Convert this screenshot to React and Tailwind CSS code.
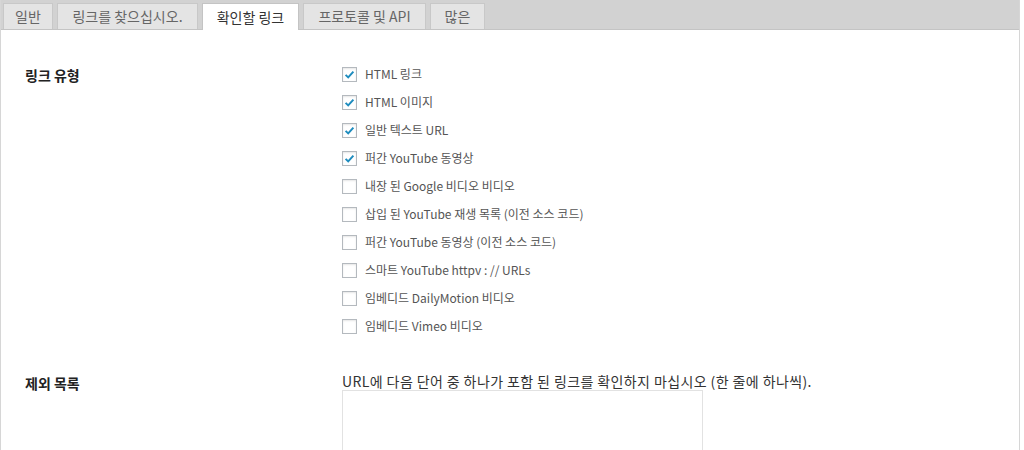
const tabs = [
  { label: "일반", w: "w-[50px]" },
  { label: "링크를 찾으십시오.", w: "w-[141px]" },
  { label: "확인할 링크", w: "w-[97px]", active: true },
  { label: "프로토콜 및 API", w: "w-[123px]" },
  { label: "많은", w: "w-[55px]" },
];

const linkTypes = [
  { label: "HTML 링크", checked: true },
  { label: "HTML 이미지", checked: true },
  { label: "일반 텍스트 URL", checked: true },
  { label: "퍼간 YouTube 동영상", checked: true },
  { label: "내장 된 Google 비디오 비디오" },
  { label: "삽입 된 YouTube 재생 목록 (이전 소스 코드)" },
  { label: "퍼간 YouTube 동영상 (이전 소스 코드)" },
  { label: "스마트 YouTube httpv : // URLs" },
  { label: "임베디드 DailyMotion 비디오" },
  { label: "임베디드 Vimeo 비디오" },
];

const Checkbox = ({ checked }) => (
  <span className="w-[15px] h-[15px] border border-[#b4b9be] bg-white shadow-[inset_0_1px_2px_rgba(0,0,0,0.1)] flex items-center justify-center shrink-0">
    {checked && (
      <svg width="13" height="13" viewBox="0 0 20 20">
        <path d="M4 10.5l4 4 8-9" fill="none" stroke="#1e8cbe" strokeWidth="3" />
      </svg>
    )}
  </span>
);

const App = () => {
  return (
    <div className="w-[1024px] h-[450px] overflow-hidden bg-white font-['Noto_Sans_CJK_KR','Liberation_Sans',sans-serif]">
      <div className="w-[1020px] h-[450px] border-l border-r border-[#d6d6d6] flex flex-col">
        {/* tab strip */}
        <div className="h-[30px] bg-[#d2d2d2] border-b border-[#c4c4c4] flex items-end gap-[4px] pl-[2px] shrink-0">
          {tabs.map((t) => (
            <div
              key={t.label}
              className={
                t.active
                  ? `${t.w} h-[27px] -mb-px bg-white border border-b-0 border-[#c4c4c4] flex items-center justify-center text-[14px] text-[#333]`
                  : `${t.w} h-[26px] bg-[#e4e4e4] border border-b-0 border-[#c8c8c8] flex items-center justify-center text-[14px] text-[#666]`
              }
            >
              {t.label}
            </div>
          ))}
        </div>

        {/* settings table */}
        <div className="grid grid-cols-[317px_1fr] pl-[24px] pt-[30px]">
          <div className="text-[14px] font-bold text-[#222] pt-[5px]">링크 유형</div>
          <div className="flex flex-col">
            {linkTypes.map((l) => (
              <label key={l.label} className="h-[28px] flex items-center gap-[8px] text-[12px] text-[#555]">
                <Checkbox checked={l.checked} />
                <span>{l.label}</span>
              </label>
            ))}
          </div>

          <div className="text-[14px] font-bold text-[#222] pt-[33px]">제외 목록</div>
          <div className="pt-[33px]">
            <p className="text-[14px] text-[#333] leading-[16px] tracking-[0.4px]">
              URL에 다음 단어 중 하나가 포함 된 링크를 확인하지 마십시오 (한 줄에 하나씩).
            </p>
            <div className="w-[361px] h-[80px] mt-[1px] border border-[#e2e2e2] bg-white"></div>
          </div>
        </div>
      </div>
    </div>
  );
};

export default App;
